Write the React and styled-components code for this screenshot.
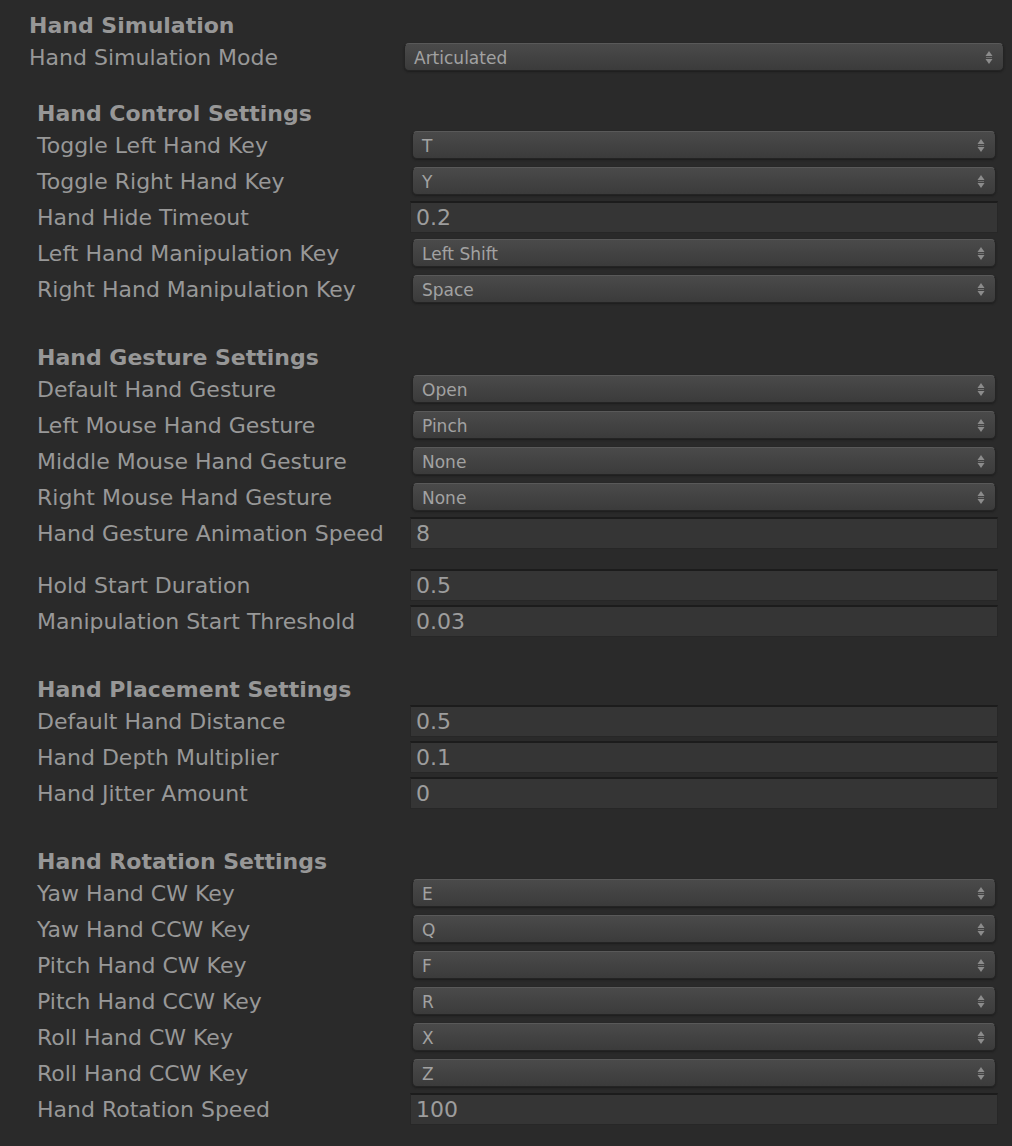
import React from 'react'
import styled, { createGlobalStyle } from 'styled-components'

const GlobalStyle = createGlobalStyle`
  html, body {
    margin: 0;
    padding: 0;
    background: #2a2a2a;
  }
  body {
    font-family: "DejaVu Sans", Verdana, sans-serif;
    color: #999999;
  }
`;

const Panel = styled.div`
  width: 1012px;
  min-height: 1146px;
  box-sizing: border-box;
  padding: 11px 8px 0 29px;
  background: #2a2a2a;
`;

const Section = styled.div`
  padding: ${p => (p.$inner ? '0 8px' : '0')};
  margin-bottom: ${p => p.$gap || 0}px;
`;

const Header = styled.div`
  height: 28px;
  line-height: 30px;
  font-weight: bold;
  font-size: 22px;
  color: #979797;
  white-space: nowrap;
`;

const Row = styled.div`
  display: grid;
  grid-template-columns: 375px 1fr;
  align-items: center;
  height: 36px;
`;

const Spacer = styled.div`
  height: ${p => p.$h}px;
`;

const Label = styled.div`
  font-size: 22px;
  line-height: 26px;
  padding-top: 1px;
  color: #989898;
  white-space: nowrap;
`;

const Dropdown = styled.div`
  position: relative;
  height: 28px;
  box-sizing: border-box;
  border-radius: 5px;
  border: 1px solid #242424;
  border-top-color: #595959;
  background: linear-gradient(#4a4a4a, #3b3b3b);
  box-shadow: 0 1px 2px #1c1c1c;
  display: flex;
  align-items: center;
  padding-left: 9px;
  padding-top: 1px;
  font-size: 17px;
  color: #a2a2a2;
`;

const Arrows = styled.svg`
  position: absolute;
  right: 10px;
  top: 7px;
`;

const Field = styled.div`
  height: 32px;
  margin: 0 -2px;
  box-sizing: border-box;
  border: 1px solid #272727;
  border-top: 2px solid #1c1c1c;
  background: #353535;
  display: flex;
  align-items: center;
  padding-left: 5px;
  font-size: 22px;
  color: #9d9d9d;
`;

const Select = ({ value }) => (
  <Dropdown>
    {value}
    <Arrows width="8" height="13" viewBox="0 0 8 13">
      <path d="M4 0 L7.5 5 L0.5 5 Z" fill="#8c8c8c" />
      <rect x="1" y="6" width="6" height="1" fill="#6e6e6e" />
      <path d="M0.5 8 L7.5 8 L4 13 Z" fill="#8c8c8c" />
    </Arrows>
  </Dropdown>
);

const Prop = ({ label, select, value }) => (
  <Row>
    <Label>{label}</Label>
    {select ? <Select value={select} /> : <Field>{value}</Field>}
  </Row>
);

const App = () => (
  <>
    <GlobalStyle />
    <Panel>
      <Section $gap={24}>
        <Header>Hand Simulation</Header>
        <Prop label="Hand Simulation Mode" select="Articulated" />
      </Section>

      <Section $inner $gap={36}>
        <Header>Hand Control Settings</Header>
        <Prop label="Toggle Left Hand Key" select="T" />
        <Prop label="Toggle Right Hand Key" select="Y" />
        <Prop label="Hand Hide Timeout" value="0.2" />
        <Prop label="Left Hand Manipulation Key" select="Left Shift" />
        <Prop label="Right Hand Manipulation Key" select="Space" />
      </Section>

      <Section $inner $gap={36}>
        <Header>Hand Gesture Settings</Header>
        <Prop label="Default Hand Gesture" select="Open" />
        <Prop label="Left Mouse Hand Gesture" select="Pinch" />
        <Prop label="Middle Mouse Hand Gesture" select="None" />
        <Prop label="Right Mouse Hand Gesture" select="None" />
        <Prop label="Hand Gesture Animation Speed" value="8" />
        <Spacer $h={16} />
        <Prop label="Hold Start Duration" value="0.5" />
        <Prop label="Manipulation Start Threshold" value="0.03" />
      </Section>

      <Section $inner $gap={36}>
        <Header>Hand Placement Settings</Header>
        <Prop label="Default Hand Distance" value="0.5" />
        <Prop label="Hand Depth Multiplier" value="0.1" />
        <Prop label="Hand Jitter Amount" value="0" />
      </Section>

      <Section $inner>
        <Header>Hand Rotation Settings</Header>
        <Prop label="Yaw Hand CW Key" select="E" />
        <Prop label="Yaw Hand CCW Key" select="Q" />
        <Prop label="Pitch Hand CW Key" select="F" />
        <Prop label="Pitch Hand CCW Key" select="R" />
        <Prop label="Roll Hand CW Key" select="X" />
        <Prop label="Roll Hand CCW Key" select="Z" />
        <Prop label="Hand Rotation Speed" value="100" />
      </Section>
    </Panel>
  </>
);

export default App
